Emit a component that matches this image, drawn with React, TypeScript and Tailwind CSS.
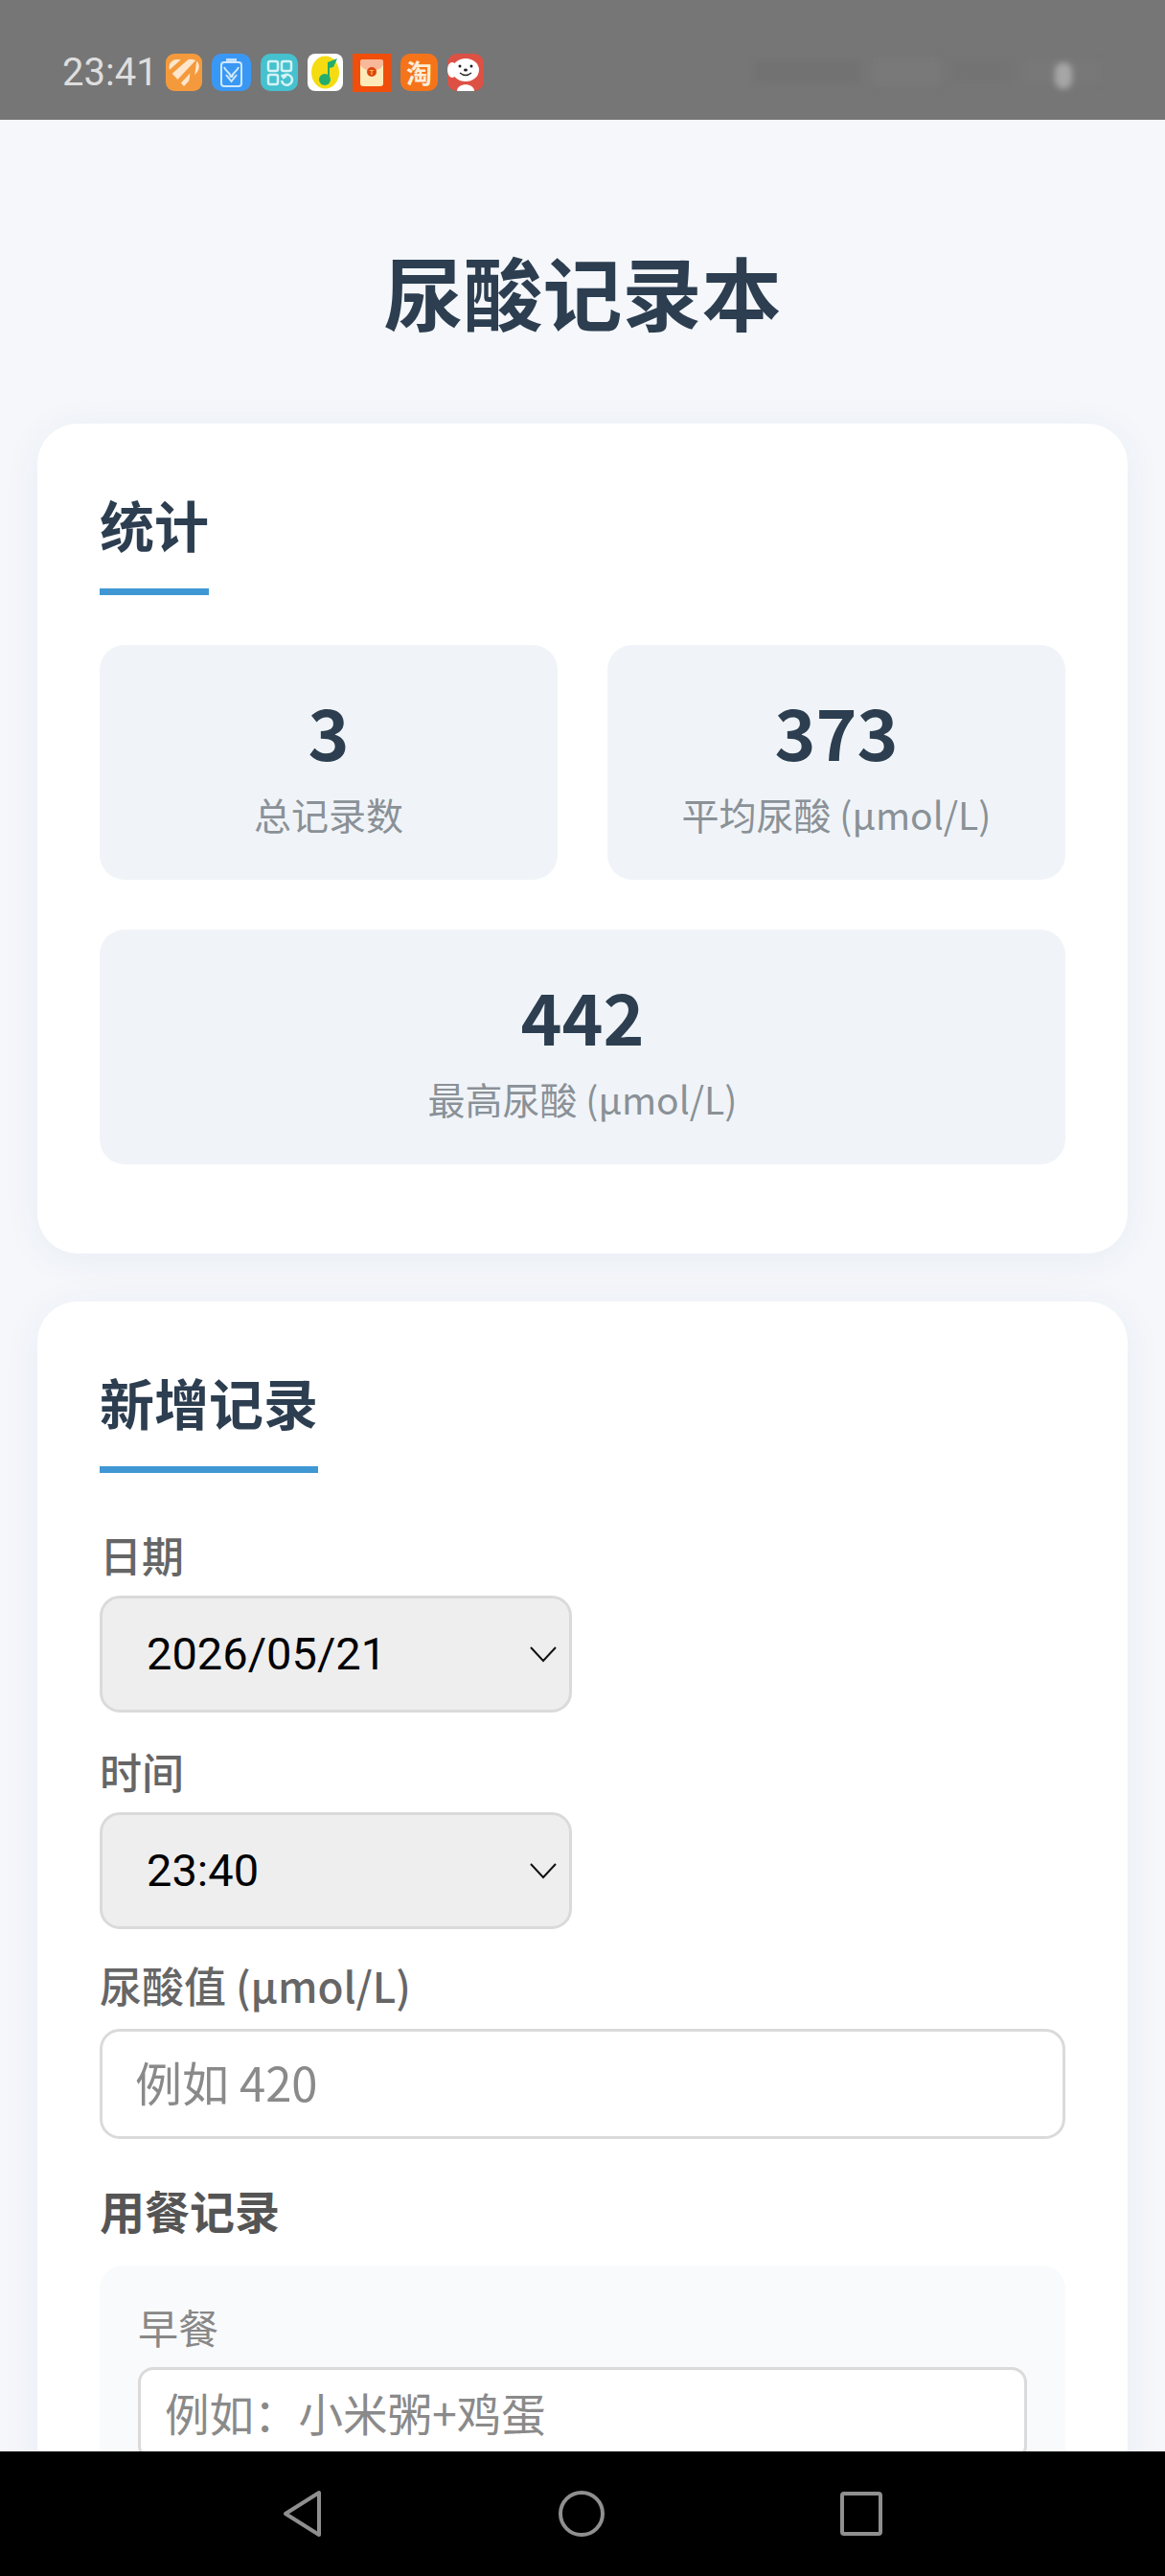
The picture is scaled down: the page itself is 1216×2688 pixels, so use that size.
import React from "react";

const StatTile = ({ value, label, wide }: { value: string; label: string; wide?: boolean }) => (
  <div className={`flex flex-col items-center rounded-[26px] bg-[#f0f4f8] pt-[50px] pb-[47px] ${wide ? "col-span-2" : ""}`}>
    <div className="text-[73px] leading-[78px] font-bold text-[#2c3e50]">{value}</div>
    <div className="mt-[26px] text-[39px] leading-[44px] text-[#8a9197]">{label}</div>
  </div>
);

const SectionTitle = ({ children }: { children: React.ReactNode }) => (
  <h2 className="inline-block border-b-[7px] border-[#3f98d3] pb-[39px] text-[57px] leading-[58px] font-bold text-[#2c3e50]">
    {children}
  </h2>
);

const PickerField = ({ label, value, className }: { label: string; value: string; className?: string }) => (
  <div className={className}>
    <div className="text-[44px] leading-[44px] font-medium text-[#666666]">{label}</div>
    <div className="mt-[21px] flex h-[122px] w-[493px] items-center justify-between rounded-[21px] border-[3px] border-[#dadada] bg-[#eeeeee] pr-[12px] pl-[46px]">
      <span className="font-['Roboto',sans-serif] text-[47px] text-black">{value}</span>
      <svg width="30" height="18" viewBox="0 0 30 18" fill="none" stroke="#111" strokeWidth="2">
        <path d="M2 2 L15 16 L28 2" />
      </svg>
    </div>
  </div>
);

// Notification tray icons
const HealthIcon = () => (
  <svg width="38" height="39" viewBox="0 0 38 39">
    <rect width="38" height="39" rx="9" fill="#f59a3c" />
    <path d="M19 34 L5 19 C1 12 6 5 13 6 C16 6 18 8 19 10 C21 7 24 5 27 6 C34 6 37 13 33 19 Z" fill="#fde6cc" />
    <path d="M4 20 L22 4 M13 30 L29 13 L26 34" stroke="#f59a3c" strokeWidth="5" fill="none" />
  </svg>
);

const BatteryIcon = () => (
  <svg width="41" height="39" viewBox="0 0 41 39">
    <rect width="41" height="39" rx="10" fill="#3a98f5" />
    <rect x="15" y="5" width="11" height="3" fill="#bfe0fb" />
    <rect x="10" y="9" width="21" height="25" rx="3" fill="none" stroke="#cfe8fc" strokeWidth="2" />
    <path d="M13 14 C15 20 20 19 20 25 M28 14 C26 20 21 19 21 25 M15 22 L20.500 29 L26 22" fill="none" stroke="#cfe8fc" strokeWidth="2" />
  </svg>
);

const GridIcon = () => (
  <svg width="39" height="39" viewBox="0 0 39 39" fill="none" stroke="#d5f3f5" strokeWidth="2.500">
    <rect width="39" height="39" rx="10" fill="#45c1cf" stroke="none" />
    <rect x="8" y="8" width="10" height="10" rx="2" />
    <rect x="22" y="8" width="10" height="10" rx="2" />
    <rect x="8" y="22" width="10" height="10" rx="2" />
    <path d="M24 23 A5.500 5.500 0 1 1 22 28 M22 22 L24 25 L27 23" />
  </svg>
);

const MusicIcon = () => (
  <svg width="37" height="39" viewBox="0 0 37 39">
    <rect width="37" height="39" rx="8" fill="#ffffff" />
    <ellipse cx="18.500" cy="19.500" rx="14.500" ry="17" fill="#f5dc12" />
    <circle cx="18" cy="27" r="6" fill="#22ad6c" />
    <path d="M21 27 L21 9 L31 5 L27 14 L23 15 L23 27 Z" fill="#22ad6c" />
  </svg>
);

const EnvelopeIcon = () => (
  <svg width="40" height="40" viewBox="0 0 40 40">
    <rect width="40" height="40" fill="#f04e0a" />
    <rect x="8" y="6" width="24" height="28" rx="3" fill="#fdeab8" />
    <path d="M8 12 C14 20 26 20 32 12 L32 9 Q32 6 29 6 L11 6 Q8 6 8 9 Z" fill="#f8b89a" />
    <circle cx="20" cy="19" r="5" fill="#d9480f" />
    <text x="20" y="22" textAnchor="middle" fontSize="8" fill="#fde68a" fontFamily="Liberation Sans">T</text>
  </svg>
);

const TaobaoIcon = () => (
  <div className="flex h-[39px] w-[39px] items-center justify-center rounded-[10px] bg-[#f5741a] text-[27px] leading-none font-bold text-[#fdeed8]">
    淘
  </div>
);

const PuppyIcon = () => (
  <svg width="38" height="39" viewBox="0 0 38 39">
    <rect width="38" height="39" rx="10" fill="#dd5145" />
    <ellipse cx="5" cy="17" rx="5" ry="8" fill="#fff" />
    <ellipse cx="19" cy="17" rx="14" ry="12" fill="#fff" />
    <path d="M10 39 C10 30 28 30 28 39 Z" fill="#fff" />
    <circle cx="13" cy="13" r="1.500" fill="#222" />
    <circle cx="25" cy="13" r="1.500" fill="#222" />
    <ellipse cx="19" cy="17" rx="2" ry="1.500" fill="#222" />
    <path d="M13 20 Q19 25 25 20" fill="none" stroke="#222" strokeWidth="1.300" />
  </svg>
);

export default function App() {
  return (
    <div className="flex h-[2688px] w-[1216px] flex-col overflow-hidden bg-[#f5f7fb] font-['Noto_Sans_CJK_SC','Noto_Sans',sans-serif]">
      <header className="flex h-[125px] shrink-0 items-start bg-[#767676] pt-[56px] pl-[65px]">
        <span className="mt-[-1px] w-[108px] font-['Roboto',sans-serif] text-[40px] leading-[41px] font-normal text-[#dedede]">23:41</span>
        <div className="flex items-start gap-[10px]">
          <HealthIcon />
          <BatteryIcon />
          <GridIcon />
          <MusicIcon />
          <EnvelopeIcon />
          <TaobaoIcon />
          <PuppyIcon />
        </div>
        <div className="relative mt-[-4px] ml-[282px] h-[46px] w-[368px] blur-[3px]">
          <div className="flex h-full items-center gap-[14px]">
            <div className="h-[22px] w-[110px] bg-[#727272]" />
            <div className="h-[30px] w-[70px] bg-[#797979]" />
            <div className="h-[18px] w-[60px] bg-[#737373]" />
            <div className="h-[26px] w-[80px] bg-[#787878]" />
          </div>
          <div className="absolute top-[13px] left-[314px] h-[28px] w-[18px] rounded-full bg-[#a6a6a6]" />
        </div>
      </header>

      <main className="min-h-0 flex-1 overflow-hidden px-[39px]">
        <h1 className="mt-[136px] text-center text-[83px] leading-[84px] font-bold text-[#2c3e50]">尿酸记录本</h1>

        <section className="mt-[97px] rounded-[42px] bg-white px-[65px] pt-[75px] pb-[93px] shadow-[0_5px_40px_rgba(40,60,100,0.06)]">
          <SectionTitle>统计</SectionTitle>
          <div className="mt-[52px] grid grid-cols-2 gap-[52px]">
            <StatTile value="3" label="总记录数" />
            <StatTile value="373" label="平均尿酸 (µmol/L)" />
            <StatTile value="442" label="最高尿酸 (µmol/L)" wide />
          </div>
        </section>

        <section className="mt-[50px] rounded-[42px] bg-white px-[65px] pt-[75px] pb-[93px] shadow-[0_5px_40px_rgba(40,60,100,0.06)]">
          <SectionTitle>新增记录</SectionTitle>
          <PickerField label="日期" value="2026/05/21" className="mt-[63px]" />
          <PickerField label="时间" value="23:40" className="mt-[39px]" />

          <div className="mt-[36px] text-[44px] leading-[44px] font-medium text-[#666666]">尿酸值 (µmol/L)</div>
          <input
            placeholder="例如 420"
            className="mt-[24px] block h-[115px] w-full rounded-[21px] border-[3px] border-[#dadada] bg-white px-[34px] pb-[7px] text-[49px] outline-none placeholder:text-[#8a8a8a]"
          />

          <div className="mt-[51px] text-[47px] leading-[46px] font-bold text-[#555555]">用餐记录</div>
          <div className="mt-[35px] rounded-[24px] bg-[#f9fafb] px-[40px] pt-[44px] pb-[40px]">
            <div className="text-[42px] leading-[40px] text-[#888888]">早餐</div>
            <input
              placeholder="例如：小米粥+鸡蛋"
              className="mt-[22px] block h-[98px] w-full rounded-[16px] border-[3px] border-[#dadada] bg-white px-[25px] pb-[5px] text-[46.500px] outline-none placeholder:text-[#8a8a8a]"
            />
          </div>
        </section>
      </main>

      <nav className="flex h-[130px] shrink-0 items-center justify-center gap-[246px] bg-black">
        <svg width="42" height="50" viewBox="0 0 42 50" fill="none" stroke="#8f8f8f" strokeWidth="4" strokeLinejoin="round">
          <path d="M38 3 L38 47 L3 25 Z" />
        </svg>
        <svg width="48" height="50" viewBox="0 0 48 50" fill="none" stroke="#8f8f8f" strokeWidth="4">
          <circle cx="24" cy="25" r="22" />
        </svg>
        <svg width="44" height="46" viewBox="0 0 44 46" fill="none" stroke="#8f8f8f" strokeWidth="4" strokeLinejoin="round">
          <rect x="2" y="2" width="40" height="42" rx="2" />
        </svg>
      </nav>
    </div>
  );
}
